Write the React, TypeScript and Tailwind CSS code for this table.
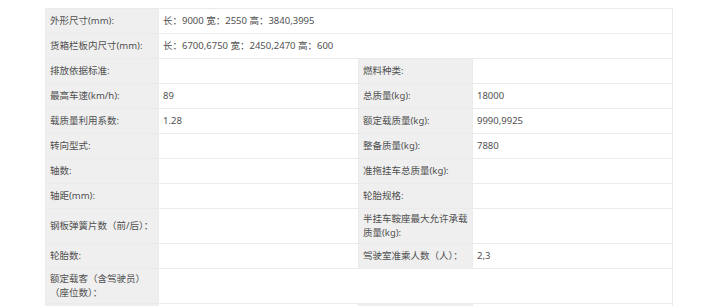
import React from 'react';

type Cell = { text?: React.ReactNode; label?: boolean; span?: boolean };

const rows: { tall?: boolean; cells: Cell[] }[] = [
  { cells: [{ text: '外形尺寸(mm):', label: true }, { text: '长：9000 宽：2550 高：3840,3995', span: true }] },
  { cells: [{ text: '货箱栏板内尺寸(mm):', label: true }, { text: '长：6700,6750 宽：2450,2470 高：600', span: true }] },
  { cells: [{ text: '排放依据标准:', label: true }, {}, { text: '燃料种类:', label: true }, {}] },
  { cells: [{ text: '最高车速(km/h):', label: true }, { text: '89' }, { text: '总质量(kg):', label: true }, { text: '18000' }] },
  { cells: [{ text: '载质量利用系数:', label: true }, { text: '1.28' }, { text: '额定载质量(kg):', label: true }, { text: '9990,9925' }] },
  { cells: [{ text: '转向型式:', label: true }, {}, { text: '整备质量(kg):', label: true }, { text: '7880' }] },
  { cells: [{ text: '轴数:', label: true }, {}, { text: '准拖挂车总质量(kg):', label: true }, {}] },
  { cells: [{ text: '轴距(mm):', label: true }, {}, { text: '轮胎规格:', label: true }, {}] },
  {
    tall: true,
    cells: [
      { text: '钢板弹簧片数（前/后）：', label: true },
      {},
      { text: <>半挂车鞍座最大允许承载<br />质量(kg):</>, label: true },
      {},
    ],
  },
  { cells: [{ text: '轮胎数:', label: true }, {}, { text: '驾驶室准乘人数（人）：', label: true }, { text: '2,3' }] },
  { tall: true, cells: [{ text: <>额定载客（含驾驶员）<br />（座位数）：</>, label: true }, { span: true }] },
  { cells: [{ label: true }, {}, { label: true }, {}] },
];

export default function App() {
  return (
    <div className="w-[720px] h-[306px] overflow-hidden bg-white pt-[8px] pl-[45px]">
      <div
        className="grid grid-cols-[112px_199px_113px_199px] gap-px p-px bg-[#ebebeb] w-[628px] text-[9.5px] leading-[14px] text-[#505050]"
        style={{ fontFamily: '"Noto Sans", "Noto Sans CJK SC", sans-serif' }}
      >
        {rows.map((row, i) =>
          row.cells.map((c, j) => (
            <div
              key={`${i}-${j}`}
              className={`flex items-center px-1 ${row.tall ? 'h-[34px]' : 'h-[24px]'} ${
                c.label ? 'bg-[#efefef]' : 'bg-white'
              } ${c.span ? 'col-span-3' : ''}`}
            >
              {c.text && <span>{c.text}</span>}
            </div>
          ))
        )}
      </div>
    </div>
  );
}
